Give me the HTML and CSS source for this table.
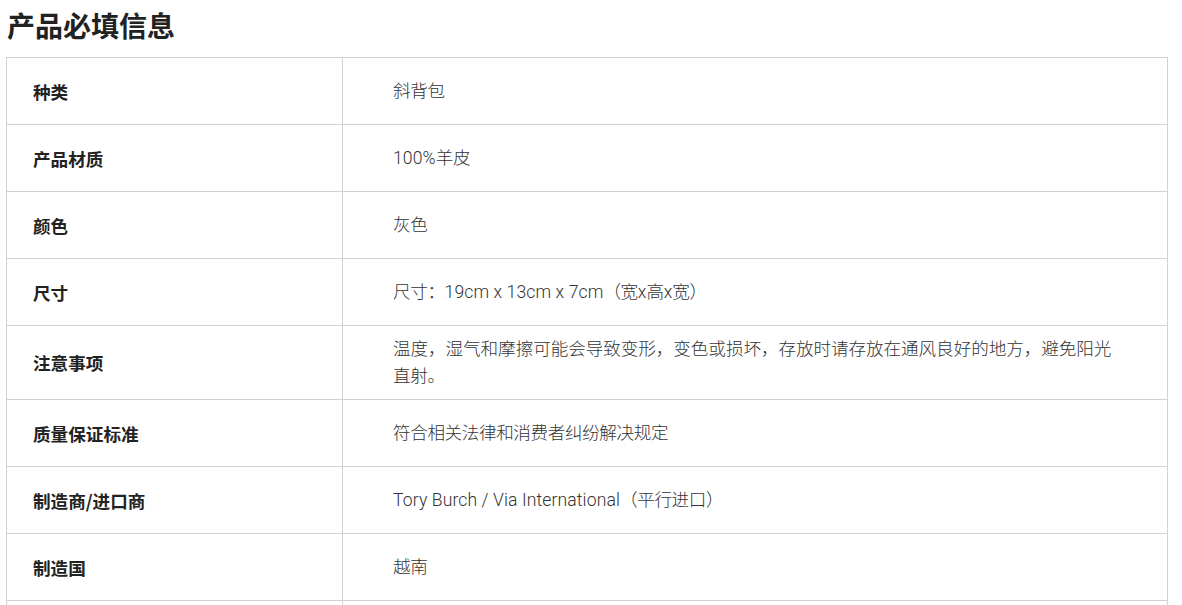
FILE: index.html
```html
<!DOCTYPE html>
<html lang="zh-CN">
<head>
<meta charset="utf-8">
<title>产品必填信息</title>
<link rel="stylesheet" href="styles.css">
</head>
<body>
<div class="page">
  <h2 class="title">产品必填信息</h2>
  <div class="spec">
    <div class="row"><div class="label">种类</div><div class="value">斜背包</div></div>
    <div class="row"><div class="label">产品材质</div><div class="value"><span class="latin">100%</span>羊皮</div></div>
    <div class="row"><div class="label">颜色</div><div class="value">灰色</div></div>
    <div class="row"><div class="label">尺寸</div><div class="value"><span>尺寸：<span class="latin">19cm x 13cm x 7cm</span>（宽<span class="latin">x</span>高<span class="latin">x</span>宽）</span></div></div>
    <div class="row"><div class="label">注意事项</div><div class="value long">温度，湿气和摩擦可能会导致变形，变色或损坏，存放时请存放在通风良好的地方，避免阳光直射。</div></div>
    <div class="row"><div class="label">质量保证标准</div><div class="value">符合相关法律和消费者纠纷解决规定</div></div>
    <div class="row"><div class="label">制造商/进口商</div><div class="value"><span><span class="latin">Tory Burch / Via International</span>（平行进口）</span></div></div>
    <div class="row"><div class="label">制造国</div><div class="value">越南</div></div>
    <div class="row"><div class="label">售后服务负责人</div><div class="value"><span><span class="latin">Via International</span> 客服中心</span></div></div>
  </div>
</div>
</body>
</html>
```
FILE: styles.css
```css
html, body {
  margin: 0;
  padding: 0;
  background: #ffffff;
}
body {
  font-family: Roboto, "Noto Sans CJK SC", "Noto Sans", sans-serif;
  color: #333333;
}
.page {
  padding: 0 14px 0 6px;
}
.title {
  margin: 0;
  padding: 0 0 0 1px;
  height: 57px;
  line-height: 50px;
  font-size: 28px;
  font-weight: 700;
  color: #222222;
  font-family: "Noto Sans CJK SC", sans-serif;
}
.spec {
  border: 1px solid #d2d2d2;
  border-bottom: none;
}
.row {
  display: grid;
  grid-template-columns: 336px 1fr;
  border-bottom: 1px solid #d2d2d2;
  min-height: 66px;
}
.label, .value {
  display: flex;
  align-items: center;
  font-size: 17.6px;
  line-height: 27px;
  padding: 9.5px 0;
}
.label {
  padding-left: 26px;
  border-right: 1px solid #d2d2d2;
  font-weight: 700;
  color: #222222;
  font-family: "Noto Sans CJK SC", sans-serif;
}
.value {
  padding-left: 50px;
  padding-right: 56px;
  font-weight: 300;
  color: #333333;
  letter-spacing: -0.4px;
}
.latin {
  letter-spacing: 0.1px;
}
.long {
  display: block;
  align-self: center;
  text-align: justify;
}
```
